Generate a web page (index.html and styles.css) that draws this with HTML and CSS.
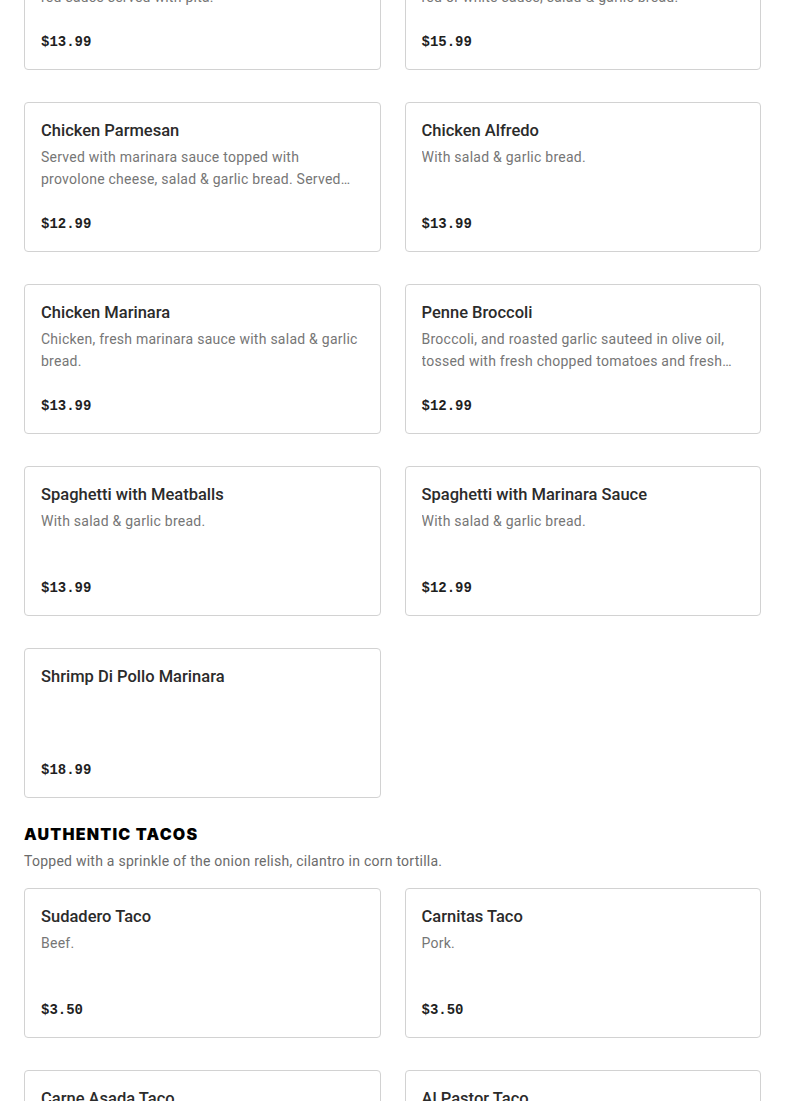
FILE: index.html
```html
<!DOCTYPE html>
<html lang="en">
<head>
    <meta charset="UTF-8">
    <meta name="viewport" content="width=device-width, initial-scale=1.0">
    <title>Menu</title>
    <link rel="stylesheet" href="styles.css">
</head>
<body>
    <main class="menu">
        <!-- Pasta section, scrolled so its first row is cut at the top -->
        <section class="section">
            <div class="grid">
                <div class="card">
                    <h3 class="card-title">Chicken Shawarma Pasta</h3>
                    <p class="card-desc">Chicken shawarma tossed with penne pasta in red sauce served with pita.</p>
                    <p class="card-price">$13.99</p>
                </div>
                <div class="card">
                    <h3 class="card-title">Shrimp Pasta</h3>
                    <p class="card-desc">Sauteed shrimp over linguine with your choice of red or white sauce, salad &amp; garlic bread.</p>
                    <p class="card-price">$15.99</p>
                </div>
                <div class="card">
                    <h3 class="card-title">Chicken Parmesan</h3>
                    <p class="card-desc">Served with marinara sauce topped with provolone cheese, salad &amp; garlic bread. Served with spaghetti.</p>
                    <p class="card-price">$12.99</p>
                </div>
                <div class="card">
                    <h3 class="card-title">Chicken Alfredo</h3>
                    <p class="card-desc">With salad &amp; garlic bread.</p>
                    <p class="card-price">$13.99</p>
                </div>
                <div class="card">
                    <h3 class="card-title">Chicken Marinara</h3>
                    <p class="card-desc">Chicken, fresh marinara sauce with salad &amp; garlic bread.</p>
                    <p class="card-price">$13.99</p>
                </div>
                <div class="card">
                    <h3 class="card-title">Penne Broccoli</h3>
                    <p class="card-desc">Broccoli, and roasted garlic sauteed in olive oil, tossed with fresh chopped tomatoes and fresh basil.</p>
                    <p class="card-price">$12.99</p>
                </div>
                <div class="card">
                    <h3 class="card-title">Spaghetti with Meatballs</h3>
                    <p class="card-desc">With salad &amp; garlic bread.</p>
                    <p class="card-price">$13.99</p>
                </div>
                <div class="card">
                    <h3 class="card-title">Spaghetti with Marinara Sauce</h3>
                    <p class="card-desc">With salad &amp; garlic bread.</p>
                    <p class="card-price">$12.99</p>
                </div>
                <div class="card">
                    <h3 class="card-title">Shrimp Di Pollo Marinara</h3>
                    <p class="card-price">$18.99</p>
                </div>
            </div>
        </section>

        <section class="section">
            <h2 class="section-title">Authentic Tacos</h2>
            <p class="section-desc">Topped with a sprinkle of the onion relish, cilantro in corn tortilla.</p>
            <div class="grid">
                <div class="card">
                    <h3 class="card-title">Sudadero Taco</h3>
                    <p class="card-desc">Beef.</p>
                    <p class="card-price">$3.50</p>
                </div>
                <div class="card">
                    <h3 class="card-title">Carnitas Taco</h3>
                    <p class="card-desc">Pork.</p>
                    <p class="card-price">$3.50</p>
                </div>
                <div class="card">
                    <h3 class="card-title">Carne Asada Taco</h3>
                    <p class="card-desc">Steak.</p>
                    <p class="card-price">$3.50</p>
                </div>
                <div class="card">
                    <h3 class="card-title">Al Pastor Taco</h3>
                    <p class="card-desc">Marinated pork.</p>
                    <p class="card-price">$3.50</p>
                </div>
            </div>
        </section>
    </main>
</body>
</html>
```

FILE: styles.css
```css
body {
    margin: 0;
    background-color: #fff;
    font-family: 'Roboto', 'Liberation Sans', sans-serif;
    color: #2d2d2d;
}

/* page is shown scrolled: first row sits partly above the fold */
.menu {
    margin-top: -80px;
    padding: 0 24px 40px;
}

.section + .section {
    margin-top: 24px;
}

.section-title {
    margin: 0;
    font-family: 'Inter', sans-serif;
    font-weight: 900;
    font-size: 16px;
    line-height: 24px;
    letter-spacing: 1.2px;
    text-transform: uppercase;
    color: #000;
}

.section-desc {
    margin: 4px 0 16px;
    font-size: 14px;
    line-height: 22px;
    letter-spacing: 0.25px;
    color: #6b6b6b;
}

.grid {
    display: grid;
    grid-template-columns: 1fr 1fr;
    gap: 32px 24px;
}

.card {
    display: flex;
    flex-direction: column;
    box-sizing: border-box;
    height: 150px;
    padding: 16px;
    border: 1px solid #d2d2d2;
    border-radius: 4px;
}

.card-title {
    margin: 0 0 3px;
    font-size: 16.5px;
    font-weight: 500;
    line-height: 24px;
    color: #2b2b2b;
}

.card-desc {
    margin: 0;
    font-size: 14px;
    line-height: 22px;
    letter-spacing: 0.25px;
    color: #767676;
    display: -webkit-box;
    -webkit-line-clamp: 2;
    -webkit-box-orient: vertical;
    overflow: hidden;
}

.card-price {
    margin: auto 0 0;
    font-family: 'Liberation Mono', monospace;
    font-weight: 700;
    font-size: 14px;
    line-height: 22px;
    color: #1f1f1f;
}
```
